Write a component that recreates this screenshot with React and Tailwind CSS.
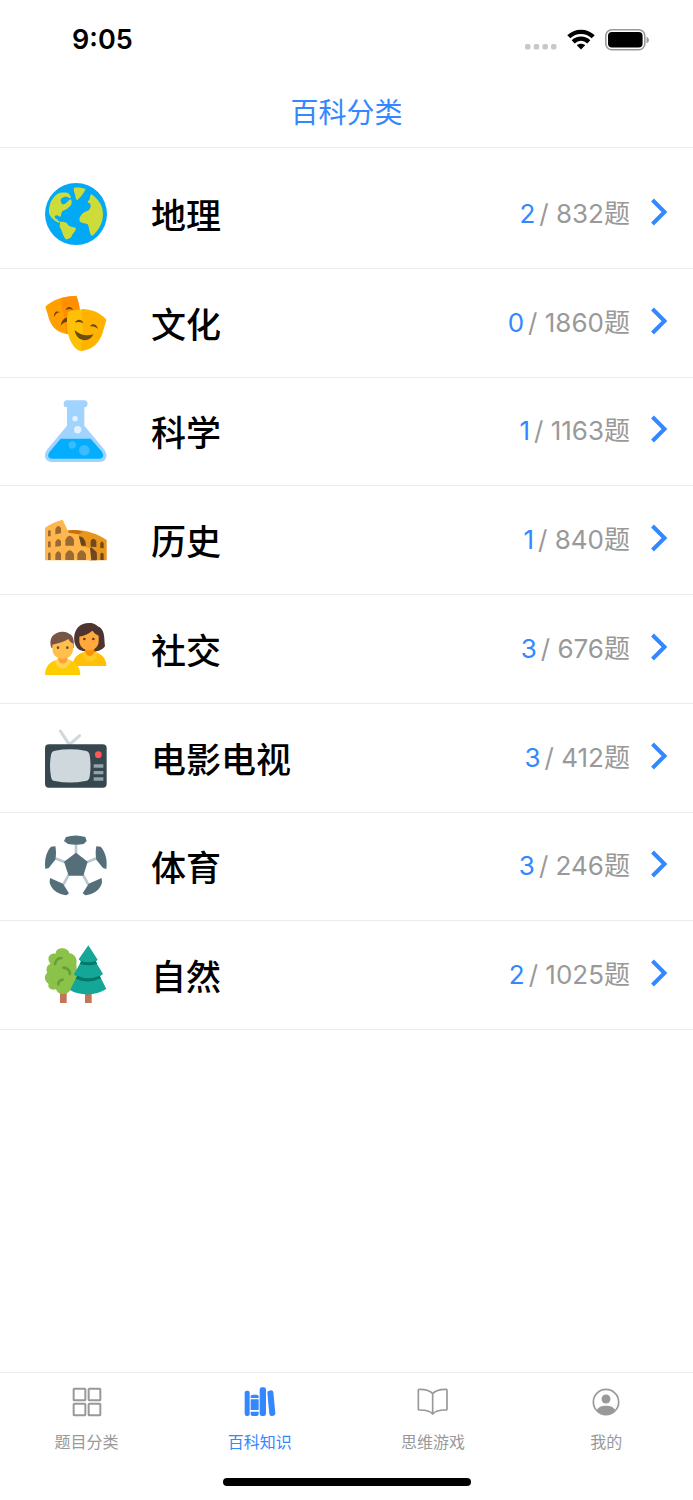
import { useState } from "react";

const GlobeIcon = () => (
    <svg viewBox="45 40 186 186" className="w-full h-full" aria-hidden="true">
        <circle cx="138" cy="133" r="93" fill="#03a9f4" />
        <g fill="#cddc39">
            <path d="M57 130C55 106 66 84 82 73C94 68 111 67 117 73C123 79 125 84 119 86C112 79 102 80 95 86C89 92 93 100 98 104C105 106 113 94 122 88C127 94 126 105 120 110C114 113 113 119 104 121C95 125 94 129 93 138C91 145 87 138 80 137C72 138 73 144 79 148C85 150 83 154 89 155L88 160C74 155 61 144 57 130Z" />
            <path d="M132 54C144 52 158 54 167 58C161 70 153 82 141 92C135 86 137 79 134 71C131 65 131 60 132 54Z" />
            <path d="M183 73C204 86 219 108 219 132C219 160 206 182 186 199C178 192 179 178 174 165C169 160 155 162 149 155C146 146 152 136 160 130C165 125 170 127 177 121C183 114 184 103 178 100C171 102 172 95 177 92C181 88 179 79 183 73Z" />
            <path d="M90 157C101 155 109 157 114 165C122 174 132 170 138 176C137 186 126 193 124 202C119 207 112 209 107 209C97 196 97 182 89 172Z" />
        </g>
    </svg>
);

const MasksIcon = () => (
    <svg viewBox="45 36 186 186" className="w-full h-full" aria-hidden="true">
        <path d="M46 80C67 60 101 48 139 48C147 66 151 94 150 110C147 143 132 158 109 162C80 155 65 141 57 116Z" fill="#ffa000" />
        <path d="M93 55C108 50 123 48 139 48C147 66 151 94 150 110C147 143 132 158 109 162Z" fill="#ff8f00" />
        <path d="M72 111C72 96 78 91 91 97C84 95 77 101 72 111ZM107 91C110 77 124 78 129 90C121 85 114 86 107 91ZM92 137C96 116 108 110 123 114V127C109 123 100 128 92 137Z" fill="#6d4000" />
        <path d="M114 96C145 81 197 87 229 119L217 160C209 185 190 209 153 213C135 211 120 187 114 162C110 143 109 119 114 96Z" fill="#ffc107" />
        <path d="M155 87C183 87 210 97 229 119L217 160C209 185 190 209 153 213L159 150Z" fill="#ffb300" />
        <path d="M135 128C141 116 156 117 160 130C151 126 143 125 135 128ZM180 139C187 128 201 133 204 147C197 140 189 138 180 139ZM134 150C149 166 171 169 190 163C181 188 139 188 134 150Z" fill="#6d4c10" />
    </svg>
);

const FlaskIcon = () => (
    <svg viewBox="45 32 186 186" className="w-full h-full" aria-hidden="true">
        <path d="M111 54C98 54 101 43 102 39C104 34 108 33 112 33H163C168 33 173 37 173 43C173 50 169 54 163 54V109L222 180C237 199 227 218 209 218H65C46 218 38 199 52 180L111 109Z" fill="#a1d3ff" />
        <path d="M92 148H182L214 185C224 198 220 208 208 208H66C54 208 50 198 61 185Z" fill="#03aeff" />
        <circle cx="135" cy="88" r="8" fill="#e3f2ff" />
        <circle cx="143" cy="121" r="11" fill="#e3f2ff" />
        <circle cx="127" cy="167" r="11" fill="#3cbcff" />
        <circle cx="163" cy="183" r="16" fill="#3cbcff" />
    </svg>
);

const ColosseumIcon = () => (
    <svg viewBox="45 28 186 186" className="w-full h-full" aria-hidden="true">
        <path d="M112 93C153 86 195 98 230 121V182H176L112 105Z" fill="#e8961e" />
        <path d="M112 93C132 89 148 91 158 98L146 103L112 105Z" fill="#c5700c" />
        <path d="M144 112C157 106 167 120 168 138H152ZM176 150L184 143L200 158V182H180Z" fill="#6b4420" />
        <path d="M45 84Q68 68 98 60L116 99L145 104L154 140L180 146L184 182H45Z" fill="#ffb74d" />
        <path d="M54 110V94Q62 87 62 96V110ZM54 143V127Q62 120 62 129V143ZM54 181V161Q62 154 62 163V181ZM76 104V88Q84 71 93 85V101ZM76 141V127Q84 110 93 125V139ZM76 181V164Q84 147 93 162V181ZM106 138V120Q119 96 132 120V138ZM106 181V163Q119 140 132 163V181ZM142 181V163Q155 140 168 163V181Z" fill="#9b6a32" />
        <path d="M182 141V123Q190 111 199 124V142ZM211 145V130Q216 120 221 131V146ZM186 181V163Q193 149 200 163V181ZM211 181V163Q216 155 221 163V181Z" fill="#71491e" />
    </svg>
);

const PeopleIcon = () => (
    <svg viewBox="45 24 186 186" className="w-full h-full" aria-hidden="true">
        <path d="M133 95C129 60 147 39 178 39C192 39 200 45 203 49C226 57 222 85 225 109C214 125 188 130 156 122Q138 118 133 95Z" fill="#4e342e" />
        <path d="M126 168C130 145 140 131 165 125H193C219 132 229 148 229 168Z" fill="#ffc107" />
        <path d="M165 112H193V126C188 142 170 142 165 126Z" fill="#ff9100" />
        <path d="M148 80Q172 75 187 62Q195 73 206 77V93C206 109 194 121 178 121C160 121 148 108 148 93Z" fill="#ffa93d" />
        <path d="M158 129L166 125C169 142 187 145 194 125L202 129C198 162 163 162 158 129Z" fill="#ffca28" />
        <g fill="#6d3d0b"><circle cx="163" cy="87" r="4" /><circle cx="190" cy="87" r="4" /></g>
        <path d="M45 195C46 166 61 153 84 149H112C136 153 150 168 151 195Z" fill="#ffcc00" />
        <path d="M84 138H113V151C107 164 90 164 84 151Z" fill="#ff9f3b" />
        <path d="M74 151L84 148C89 166 107 166 113 148L123 151C114 184 83 184 74 151Z" fill="#ffd54f" />
        <path d="M64 113C54 78 76 66 99 65C109 66 114 67 117 71C133 76 132 97 131 113Z" fill="#795548" />
        <path d="M67 104Q98 98 115 87Q119 97 130 101V112C129 136 116 147 98 147C78 145 68 135 67 117Z" fill="#ffbf4d" />
        <g fill="#784b16"><circle cx="84" cy="113" r="4" /><circle cx="112" cy="113" r="4" /></g>
    </svg>
);

const TvIcon = () => (
    <svg viewBox="45 35 186 186" className="w-full h-full" aria-hidden="true">
        <path d="M91 47L118 88L149 61" fill="none" stroke="#cfd8dc" strokeWidth="9" strokeLinecap="round" />
        <rect x="45" y="87" width="185" height="130" rx="12" fill="#37474f" />
        <path d="M75 106Q120 98 166 106C174 107 177 110 179 119Q184 151 179 184C177 193 173 196 166 197Q120 206 75 197C67 196 65 193 63 184Q57 151 63 119C65 110 67 107 75 106Z" fill="#cfd8dc" />
        <circle cx="205" cy="118" r="10" fill="#ff5757" />
        <path d="M191 147H220V157H191ZM191 167H220V177H191ZM191 186H220V196H191Z" fill="#90a4ae" />
    </svg>
);

const BallIcon = () => (
    <svg viewBox="45 31 186 186" className="w-full h-full" aria-hidden="true">
        <path d="M138 58V88M75 101L105 113M200 101L170 113M100 180L118 147M175 180L157 147" stroke="#bcc8cf" strokeWidth="8" />
        <g fill="#546e7a">
            <path d="M138 84L173 111L160 153H116L102 111Z" />
            <path d="M102 49L108 37Q137 28 166 37L170 49L161 58Q138 62 114 58Z" />
            <path d="M63 66L76 65Q80 84 76 105L56 130L46 133C43 108 47 84 63 66Z" />
            <path d="M212 66L199 65Q195 84 199 105L219 130L229 133C232 108 228 84 212 66Z" />
            <path d="M60 160L99 177L117 206L109 212C85 210 63 195 59 173Z" />
            <path d="M215 160L176 177L158 206L166 212C190 210 212 195 216 173Z" />
        </g>
    </svg>
);

const TreesIcon = () => (
    <svg viewBox="45 27 186 186" className="w-full h-full" aria-hidden="true">
        <path d="M90 170H110V204H90ZM165 170H185V204H165Z" fill="#c47457" />
        <path d="M77 56C77 35 113 35 118 54C134 57 143 72 139 85L143 150L120 166C116 180 85 184 78 163C64 168 51 158 56 147C42 138 41 122 52 113C46 102 51 90 61 86C49 72 57 53 77 56Z" fill="#8bc34a" />
        <path d="M75 87Q78 70 94 69M100 98Q118 99 120 117M85 148Q85 136 98 134" fill="none" stroke="#689f38" strokeWidth="8" strokeLinecap="round" />
        <path d="M175 31L203 74L197 80L219 117L210 124L229 162C199 183 149 183 120 165L141 124L131 119L153 80L146 73Z" fill="#14a697" />
        <path d="M154 78Q175 86 197 78L202 86Q175 96 149 86ZM142 122Q174 138 208 122L213 130Q174 148 137 131Z" fill="#00796b" />
    </svg>
);

const GridIcon = () => (
    <svg viewBox="214 78 96 96" className="w-8 h-8" fill="none" stroke="currentColor" strokeWidth="6" aria-hidden="true">
        <rect x="222" y="86" width="35" height="35" rx="2" />
        <rect x="267" y="86" width="35" height="35" rx="2" />
        <rect x="222" y="131" width="35" height="35" rx="2" />
        <rect x="267" y="131" width="35" height="35" rx="2" />
    </svg>
);

const BooksIcon = () => (
    <svg viewBox="733 78 96 96" className="w-8 h-8" fill="currentColor" aria-hidden="true">
        <rect x="735" y="92" width="15" height="76" rx="6" />
        <path d="M753 114V109Q753 104 759 104H771Q777 104 777 109V114ZM753 118H777V150H753ZM753 155H777V162Q777 168 771 168H759Q753 168 753 162Z" />
        <rect x="780" y="82" width="19" height="86" rx="7" />
        <path d="M808 92L815 91Q820 91 821 97L827 160Q827 166 822 167L815 168Q810 168 809 162L803 99Q802 93 808 92Z" />
    </svg>
);

const BookIcon = () => (
    <svg viewBox="212 78 96 96" className="w-8 h-8" fill="none" stroke="currentColor" strokeWidth="5" strokeLinejoin="round" aria-hidden="true">
        <path d="M259 101Q247 87 218 88Q216 88 216 91V148Q216 150 218 150Q248 149 259 162Q270 149 300 150Q302 150 302 148V91Q302 88 300 88Q271 87 259 101ZM259 101V162" />
    </svg>
);

const ProfileIcon = () => (
    <svg viewBox="734 78 96 96" className="w-8 h-8" aria-hidden="true">
        <circle cx="782" cy="126" r="38" fill="none" stroke="currentColor" strokeWidth="5" />
        <circle cx="782" cy="117" r="13.5" fill="currentColor" />
        <path d="M755 150C760 133 804 133 809 150Q798 163 782 163Q766 163 755 150Z" fill="currentColor" />
    </svg>
);

const categories = [
    { name: "地理", done: 2, total: 832, Icon: GlobeIcon },
    { name: "文化", done: 0, total: 1860, Icon: MasksIcon },
    { name: "科学", done: 1, total: 1163, Icon: FlaskIcon },
    { name: "历史", done: 1, total: 840, Icon: ColosseumIcon },
    { name: "社交", done: 3, total: 676, Icon: PeopleIcon },
    { name: "电影电视", done: 3, total: 412, Icon: TvIcon },
    { name: "体育", done: 3, total: 246, Icon: BallIcon },
    { name: "自然", done: 2, total: 1025, Icon: TreesIcon },
];

const tabs = [
    { name: "题目分类", Icon: GridIcon },
    { name: "百科知识", Icon: BooksIcon },
    { name: "思维游戏", Icon: BookIcon },
    { name: "我的", Icon: ProfileIcon },
];

const StatusBar = () => (
    <div className="h-20 pl-[72px] pr-11 flex items-center justify-between">
        <span className="text-[27px] leading-8 font-semibold">9:05</span>
        <div className="flex items-center">
            {/* No signal */}
            <svg viewBox="0 0 32 22" className="w-8 h-[22px]" fill="#c8c8c8" aria-hidden="true">
                <rect x="0" y="15" width="5.5" height="5.5" rx="1.8" />
                <rect x="8.7" y="15" width="5.5" height="5.5" rx="1.8" />
                <rect x="17.4" y="15" width="5.5" height="5.5" rx="1.8" />
                <rect x="26" y="15" width="5.5" height="5.5" rx="1.8" />
            </svg>
            {/* Wifi */}
            <svg viewBox="0 0 28 22" className="w-7 h-[22px] ml-2.5" fill="none" stroke="#000" strokeWidth="4.4" aria-hidden="true">
                <path d="M1.8 7.8C8.5 1.2 19.5 1.2 26.2 7.8" />
                <path d="M6.2 12.8C10.6 8.6 17.4 8.6 21.8 12.8" />
                <path d="M14 20.6L9.8 16.3C12 14.3 16 14.3 18.2 16.3Z" fill="#000" stroke="none" />
            </svg>
            {/* Battery */}
            <svg viewBox="0 0 44 22" className="w-11 h-[22px] ml-2.5" aria-hidden="true">
                <rect x="0.8" y="0.8" width="39" height="20" rx="6" fill="none" stroke="#999" strokeWidth="1.6" />
                <rect x="3" y="3" width="34.6" height="15.6" rx="4" fill="#000" />
                <path d="M41.5 7.5Q44 9 44 11Q44 13 41.5 14.5Z" fill="#999" />
            </svg>
        </div>
    </div>
);

const App = () => {
    const [activeTab, setActiveTab] = useState("百科知识");

    return (
        <div className="min-h-screen flex flex-col bg-white text-black font-[Inter,'Noto_Sans_CJK_SC',sans-serif]">
            <StatusBar />

            <header className="h-[68px] pb-0.5 flex items-center justify-center border-b border-[#ebebeb]">
                <h1 className="text-[28px] leading-10 text-[#3388ff]">百科分类</h1>
            </header>

            {/* Category list */}
            <main className="flex-1 pt-3">
                <ul className="grid auto-rows-fr min-h-[58vh]">
                    {categories.map(({ name, done, total, Icon }) => (
                        <li key={name} className="border-b border-[#ebebeb]">
                            <a href="#" className="h-full py-5 pl-[45px] pr-[25px] flex items-center">
                                <span className="w-[62px] h-[62px] shrink-0">
                                    <Icon />
                                </span>
                                <span className="ml-11 mt-1 text-[35px] leading-10 font-medium">{name}</span>
                                <span className="ml-auto text-[26px] leading-10 text-[#999999] whitespace-nowrap">
                                    <span className="mr-1 text-[#3388ff]">{done}</span>/ {total}题
                                </span>
                                <svg viewBox="0 0 18 30" className="w-[18px] h-[30px] ml-5 mb-1" fill="none" stroke="#3388ff" strokeWidth="4" aria-hidden="true">
                                    <path d="M2.5 3L14.5 15L2.5 27" />
                                </svg>
                            </a>
                        </li>
                    ))}
                </ul>
            </main>

            {/* Tab bar */}
            <footer className="border-t border-[#ebebeb] pb-[14px]">
                <nav className="grid grid-cols-4">
                    {tabs.map(({ name, Icon }) => (
                        <button
                            key={name}
                            onClick={() => setActiveTab(name)}
                            className={`pt-[13px] pb-6 flex flex-col items-center gap-3 cursor-pointer ${
                                activeTab === name ? "text-[#3388ff]" : "text-[#999999]"
                            }`}
                        >
                            <Icon />
                            <span className="text-base leading-6">{name}</span>
                        </button>
                    ))}
                </nav>
                <div className="w-[248px] h-2 mx-auto rounded-full bg-black" />
            </footer>
        </div>
    );
};

export default App;
